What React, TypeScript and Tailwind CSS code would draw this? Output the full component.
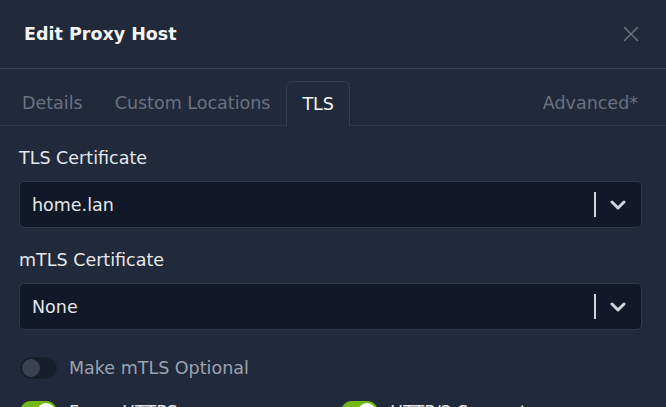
import { X } from 'lucide-react';

const tabs = ['Details', 'Custom Locations', 'TLS'];

const Chevron = () => (
  <svg width="16" height="10" viewBox="0 0 16 10" fill="none">
    <path d="M2 2l6 6 6-6" stroke="#d1d5db" strokeWidth="3" strokeLinecap="round" strokeLinejoin="round" />
  </svg>
);

const SelectBox = ({ value }: { value: string }) => (
  <div className="flex items-center h-[47px] rounded-[5px] border border-[#303a4a] bg-[#111827] pl-[12px] pr-[15px]">
    <span className="flex-1 text-[#e5e7eb]">{value}</span>
    <div className="w-[2px] h-[25px] bg-[#d1d5db]" />
    <div className="ml-[14px] flex items-center">
      <Chevron />
    </div>
  </div>
);

const Toggle = ({ on }: { on: boolean }) => (
  <div
    className={
      on
        ? 'relative w-[37px] h-[22px] rounded-full bg-[#74b816] shrink-0'
        : 'relative w-[37px] h-[22px] rounded-full bg-[#161d2b] border border-[#1b2331] shrink-0'
    }
  >
    <div
      className={
        on
          ? 'absolute top-[2px] right-[2px] w-[18px] h-[18px] rounded-full bg-white'
          : 'absolute top-[1px] left-[1px] w-[18px] h-[18px] rounded-full bg-[#3a4252]'
      }
    />
  </div>
);

export default function App() {
  return (
    <div
      className="w-[666px] h-[407px] overflow-hidden bg-[#202a3a] text-[17.5px] leading-[26px]"
      style={{ fontFamily: '"DejaVu Sans", Verdana, sans-serif' }}
    >
      {/* Header */}
      <div className="flex items-center justify-between h-[69px] border-b border-[#353f4e] pl-[24px] pr-[22px]">
        <h1 className="font-bold text-[17.5px] text-[#f3f4f6]">Edit Proxy Host</h1>
        <X className="w-[26px] h-[26px] text-[#6b7280]" strokeWidth={1.4} />
      </div>

      {/* Tabs */}
      <div className="flex items-end pt-[11px] pl-[6px] pr-[12px] border-b border-[#2d3748]">
        {tabs.map((t) => (
          <div
            key={t}
            className={
              t === 'TLS'
                ? 'h-[45px] -mb-px flex items-center px-[15px] border border-b-0 border-[#343e4d] rounded-t-[6px] bg-[#202a3a] text-[#f3f4f6]'
                : 'h-[45px] flex items-center px-[16px] text-[#6b7280]'
            }
          >
            {t}
          </div>
        ))}
        <div className="ml-auto h-[45px] flex items-center px-[16px] text-[#6b7280]">Advanced*</div>
      </div>

      {/* Body */}
      <div className="pl-[19px] pr-[24px] pt-[19px]">
        <div className="mb-[19px]">
          <label className="block mb-[10px] text-[#e5e7eb]">TLS Certificate</label>
          <SelectBox value="home.lan" />
        </div>
        <div>
          <label className="block mb-[10px] text-[#e5e7eb]">mTLS Certificate</label>
          <SelectBox value="None" />
        </div>

        <div className="flex items-center gap-[12px] mt-[25px] pl-[1px]">
          <Toggle on={false} />
          <span className="text-[#9ca3af]">Make mTLS Optional</span>
        </div>

        <div className="grid grid-cols-2 gap-x-[20px] mt-[18px] pl-[1px]">
          <div className="flex items-center gap-[12px]">
            <Toggle on />
            <span className="text-[#e5e7eb]">Force HTTPS</span>
          </div>
          <div className="flex items-center gap-[12px]">
            <Toggle on />
            <span className="text-[#e5e7eb]">HTTP/2 Support</span>
          </div>
        </div>
      </div>
    </div>
  );
}
